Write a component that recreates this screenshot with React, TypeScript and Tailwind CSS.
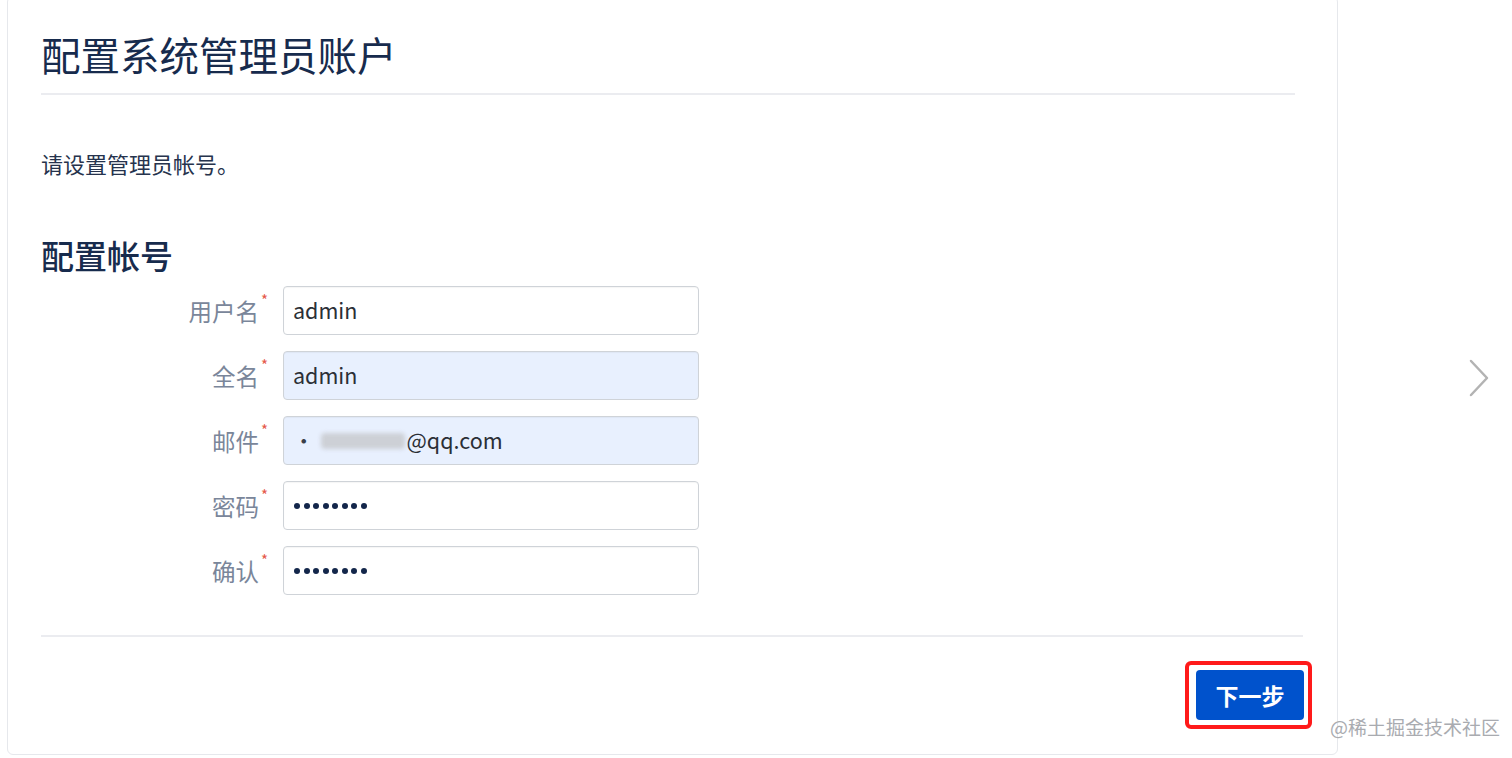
import React from 'react';

const fields = [
  { label: '用户名', value: 'admin', type: 'text', filled: false },
  { label: '全名', value: 'admin', type: 'text', filled: true },
  { label: '邮件', value: 'email', type: 'email', filled: true },
  { label: '密码', value: '', type: 'password', filled: false },
  { label: '确认', value: '', type: 'password', filled: false },
];

function Dots() {
  return (
    <span className="flex items-center gap-[3.5px]">
      {Array.from({ length: 8 }).map((_, i) => (
        <span key={i} className="h-[6px] w-[6px] rounded-full bg-[#13264a]" />
      ))}
    </span>
  );
}

function Field({ label, value, type, filled }: (typeof fields)[number]) {
  return (
    <div className="flex items-center">
      <div className="flex w-[226px] justify-end pr-[8px]">
        <span className="relative text-[23.5px] leading-[30px] text-[#7a869a]">
          {label}
          <span className="absolute -right-[9px] -top-[4px] text-[15px] leading-none text-[#e5584a]">*</span>
        </span>
      </div>
      <div
        className={`ml-[16px] flex h-[49px] w-[416px] items-center rounded-[4px] border border-[#cfd3d8] pl-[9px] text-[21.5px] text-[#2b2f36] shadow-[inset_0_1px_1px_rgba(0,0,0,0.04)] ${
          filled ? 'bg-[#e8f0fe]' : 'bg-white'
        }`}
      >
        {type === 'email' ? (
          <span className="flex items-center">
            <span className="text-[#3a3f48]">·</span>
            <span className="ml-[6px] h-[16px] w-[84px] rounded-sm bg-[#cdd0d6] blur-[2px]" />
            <span className="ml-[2px]">@qq.com</span>
          </span>
        ) : type === 'password' ? (
          <span className="pl-[1px]">
            <Dots />
          </span>
        ) : (
          <span>{value}</span>
        )}
      </div>
    </div>
  );
}

export default function App() {
  return (
    <div
      className="relative flex h-[758px] w-[1512px] overflow-hidden bg-white"
      style={{ fontFamily: '"Noto Sans CJK SC", "Noto Sans", sans-serif' }}
    >
      {/* Setup card */}
      <div className="-mt-[4px] ml-[7px] flex h-[759px] w-[1331px] flex-col rounded-[6px] border border-[#e6e8ec] pl-[33px] pr-[25px] pt-[34px]">
        <h1 className="text-[39.5px] font-normal leading-[46px] text-[#172b4d]">配置系统管理员账户</h1>
        <div className="mt-[16px] h-[2px] w-[1254px] bg-[#ebecf0]" />

        <p className="mt-[54px] text-[22px] leading-[28px] text-[#26334d]">请设置管理员帐号。</p>

        <h2 className="mt-[58px] text-[33px] font-medium leading-[40px] text-[#172b4d]">配置帐号</h2>

        <div className="mt-[11px] flex flex-col gap-[16px]">
          {fields.map((f) => (
            <Field key={f.label} {...f} />
          ))}
        </div>

        <div className="mt-[40px] mr-[9px] h-[2px] bg-[#ebecf0]" />

        <div className="mt-[24px] flex justify-end">
          <div className="rounded-[6px] border-4 border-[#ff1a1a] py-[5px] pl-[7px] pr-[4px]">
            <button className="flex h-[50px] w-[108px] items-center justify-center rounded-[4px] bg-[#0052cc] text-[23px] font-bold text-white">
              下一步
            </button>
          </div>
        </div>
      </div>

      {/* Next arrow */}
      <div className="flex flex-1 items-center justify-end pr-[22px]">
        <svg width="22" height="40" viewBox="0 0 22 40" fill="none" className="mt-[-2px]">
          <polyline points="3,3 19,20 3,37" stroke="#b3b3b3" strokeWidth="2.5" strokeLinecap="round" strokeLinejoin="round" />
        </svg>
      </div>

      {/* Watermark */}
      <span className="absolute left-[1330px] top-[714px] text-[19px] leading-[26px] text-[#a9abb0]">@稀土掘金技术社区</span>
    </div>
  );
}
